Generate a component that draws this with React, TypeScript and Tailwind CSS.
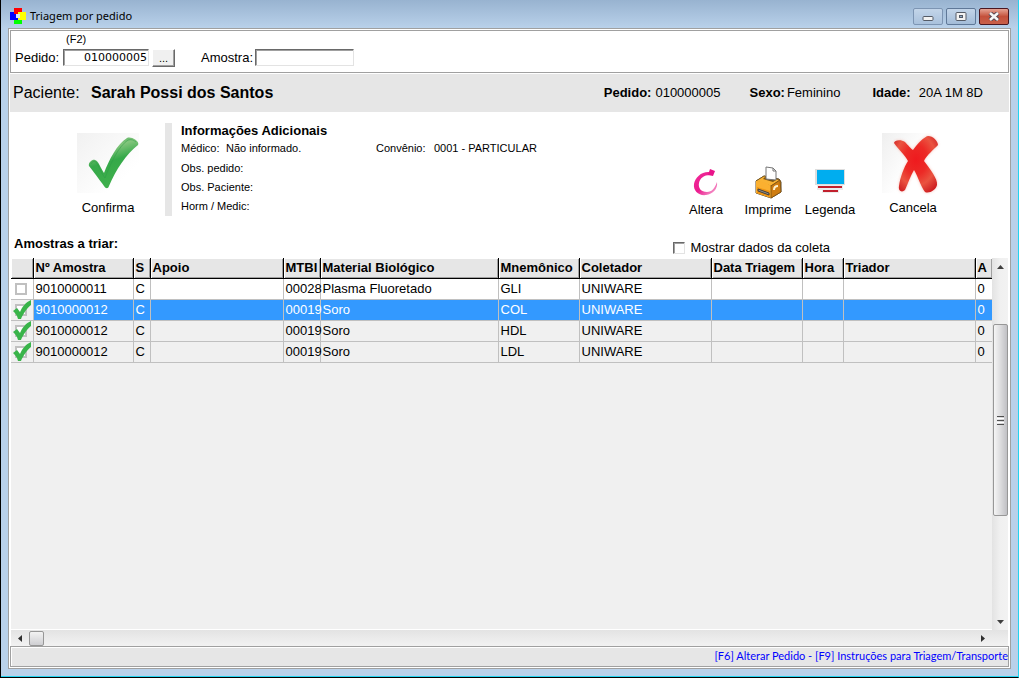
import { useState } from "react";
import type { ReactNode } from "react";

const columns = [
  { title: "", width: "w-[22px]" },
  { title: "Nº Amostra", width: "w-[100px]" },
  { title: "S", width: "w-[17px]" },
  { title: "Apoio", width: "w-[133px]" },
  { title: "MTBI", width: "w-[37px]" },
  { title: "Material Biológico", width: "w-[178px]" },
  { title: "Mnemônico", width: "w-[81px]" },
  { title: "Coletador", width: "w-[132px]" },
  { title: "Data Triagem", width: "w-[91px]" },
  { title: "Hora", width: "w-[41px]" },
  { title: "Triador", width: "" },
  { title: "A", width: "w-[17px]" },
];

const samples = [
  { id: 1, checked: false, cells: ["9010000011", "C", "", "00028", "Plasma Fluoretado", "GLI", "UNIWARE", "", "", "", "0"] },
  { id: 2, checked: true, cells: ["9010000012", "C", "", "00019", "Soro", "COL", "UNIWARE", "", "", "", "0"] },
  { id: 3, checked: true, cells: ["9010000012", "C", "", "00019", "Soro", "HDL", "UNIWARE", "", "", "", "0"] },
  { id: 4, checked: true, cells: ["9010000012", "C", "", "00019", "Soro", "LDL", "UNIWARE", "", "", "", "0"] },
];

const details = ["Obs. pedido:", "Obs. Paciente:", "Horm / Medic:"];

function LogoIcon() {
  return (
    <svg width="16" height="16" viewBox="0 0 16 16" shapeRendering="crispEdges">
      <rect x="4" y="0" width="8" height="8" fill="#ff0000" />
      <rect x="8" y="4" width="8" height="8" fill="#ffff00" />
      <rect x="4" y="8" width="8" height="8" fill="#00ff00" />
      <rect x="0" y="4" width="8" height="8" fill="#0000ff" />
      <rect x="4" y="4" width="4" height="2" fill="#ff0000" />
      <rect x="8" y="8" width="4" height="4" fill="#ffff00" />
      <rect x="6" y="6" width="4" height="4" fill="#dbe8f5" />
    </svg>
  );
}

function ConfirmIcon() {
  return (
    <svg width="62" height="62" viewBox="0 0 62 62">
      <defs>
        <linearGradient id="confirm-bg" x1="0" y1="0" x2="1" y2="1">
          <stop offset="0" stopColor="#f1f1f1" />
          <stop offset="0.75" stopColor="#ffffff" />
        </linearGradient>
        <linearGradient id="confirm-fill" x1="0" y1="0" x2="0.3" y2="1">
          <stop offset="0" stopColor="#2fa348" />
          <stop offset="0.3" stopColor="#83c57c" />
          <stop offset="0.55" stopColor="#35a949" />
          <stop offset="1" stopColor="#3fb04c" />
        </linearGradient>
      </defs>
      <rect width="62" height="60" fill="url(#confirm-bg)" />
      <path
        d="M12 33C11 30 15 26 18 27C21 27 24 36 27 40C32 27 40 11 50 5C54 3 63 8 61 12C49 21 39 37 32 53C31 56 29 56 27 53C22 46 16 38 12 33Z"
        fill="url(#confirm-fill)"
      />
      <path d="M14 31C15 28 18 28 19 29C22 33 24 40 28 45C34 29 42 13 51 7C54 6 57 7 59 9" fill="none" stroke="#2c9c45" strokeWidth="1" opacity="0.5" />
    </svg>
  );
}

const crossPath =
  "M12 10C12 7 19 6 23 9C26 12 29 16 31 17C36 10 42 4 46 3C51 3 56 8 56 12C52 16 44 23 42 28C48 36 56 46 55 52C54 57 47 61 43 59C39 54 35 41 32 37C29 42 26 50 23 57C20 60 16 58 17 53C18 45 22 34 26 28C23 22 16 16 12 10Z";

function CancelIcon() {
  return (
    <svg width="62" height="62" viewBox="0 0 62 62">
      <defs>
        <linearGradient id="cancel-bg" x1="0" y1="0" x2="1" y2="0.6">
          <stop offset="0" stopColor="#efefef" />
          <stop offset="0.6" stopColor="#ffffff" />
        </linearGradient>
        <radialGradient id="cancel-fill" cx="0.5" cy="0.42" r="0.65">
          <stop offset="0" stopColor="#ef1a1e" />
          <stop offset="0.4" stopColor="#ec2a26" />
          <stop offset="0.7" stopColor="#ea5340" />
          <stop offset="1" stopColor="#cf1f22" />
        </radialGradient>
        <filter id="cancel-glow" x="-20%" y="-20%" width="140%" height="140%">
          <feGaussianBlur stdDeviation="1.5" />
        </filter>
      </defs>
      <rect width="62" height="60" fill="url(#cancel-bg)" />
      <path d={crossPath} fill="#f29a8c" opacity="0.6" filter="url(#cancel-glow)" />
      <path d={crossPath} fill="url(#cancel-fill)" />
    </svg>
  );
}

function EditIcon() {
  return (
    <svg width="26" height="28" viewBox="0 0 26 28">
      <defs>
        <linearGradient id="edit-fill" x1="0" y1="0" x2="1" y2="1">
          <stop offset="0" stopColor="#f02a98" />
          <stop offset="0.5" stopColor="#ec1c8f" />
          <stop offset="1" stopColor="#f6b5d8" />
        </linearGradient>
      </defs>
      <path
        d="M17 3C9 2 2 8 1 15C0 22 6 27 13 26C20 25 25 20 24 13C22 19 19 23 14 23C8 23 5 19 6 14C7 9 11 6 17 6Z"
        fill="url(#edit-fill)"
      />
      <path d="M17 0L22 2L20 7L15 6Z" fill="#e9148a" />
    </svg>
  );
}

function PrinterIcon() {
  return (
    <svg width="30" height="33" viewBox="0 0 30 33">
      <path d="M3 15L11 10L26 13L28 16V26L18 32L3 27Z" fill="#f6a21b" stroke="#5a4a30" />
      <path d="M3 15L11 10L27 14L18 20Z" fill="#f9b233" stroke="#6d5020" strokeWidth="0.8" />
      <path d="M3 15C8 15 14 17 18 20V32L3 27Z" fill="#fbb030" />
      <path d="M4 21L17 25V31L4 27Z" fill="#ee9312" />
      <path d="M18 20L27 14L28 26L18 32Z" fill="#cf7d12" stroke="#7a5015" strokeWidth="0.8" />
      <path d="M10 13L20 16L23 14L12 11Z" fill="#7b5413" />
      <path d="M13 1L20 2L23 5V14L13 13Z" fill="#ffffff" stroke="#777777" />
      <path d="M20 2V5H23" fill="none" stroke="#777777" />
      <path d="M5 23L16 27V29L5 25Z" fill="#8f8f8f" stroke="#44413c" />
      <path d="M21 24C21 21 23 20 25 20" fill="none" stroke="#fff1cf" strokeWidth="2" />
    </svg>
  );
}

function LegendIcon() {
  return (
    <svg width="30" height="26" viewBox="0 0 30 26" shapeRendering="crispEdges">
      <rect width="30" height="16" fill="#dedede" />
      <rect x="2" y="1" width="27" height="14" fill="#00adef" />
      <rect x="2" y="16" width="26" height="5" fill="#ececec" />
      <rect x="3" y="17" width="24" height="2" fill="#c1202d" />
      <rect x="7" y="20" width="17" height="4" fill="#ececec" />
      <rect x="8" y="21" width="15" height="2" fill="#c1202d" />
    </svg>
  );
}

function ToolButton({ label, children }: { label: string; children: ReactNode }) {
  return (
    <button className="flex w-[62px] flex-col items-center">
      {children}
      <span className="text-[13px] leading-4">{label}</span>
    </button>
  );
}

function WindowControls() {
  return (
    <div className="flex gap-[3px]">
      <button
        aria-label="Minimizar"
        className="flex h-[17px] w-[30px] items-center justify-center rounded-xs border border-[#7d95b3] bg-gradient-to-b from-[#c3d5e9] to-[#a9c1dc]"
      >
        <svg width="12" height="9" viewBox="0 0 12 9">
          <rect x="1" y="4.5" width="10" height="4" rx="1" fill="#f2f2f2" stroke="#555b66" />
        </svg>
      </button>
      <button
        aria-label="Maximizar"
        className="flex h-[17px] w-[30px] items-center justify-center rounded-xs border border-[#5f7898] bg-gradient-to-b from-[#c3d5e9] to-[#a3bcd8]"
      >
        <svg width="12" height="9" viewBox="0 0 12 9">
          <rect x="1" y="0.5" width="10" height="8" rx="1" fill="#f2f2f2" stroke="#555b66" />
          <rect x="4.5" y="3.5" width="3" height="2" fill="#8fa9c8" stroke="#555b66" />
        </svg>
      </button>
      <button
        aria-label="Fechar"
        className="flex h-[17px] w-[30px] items-center justify-center rounded-xs border border-[#4b1720] bg-gradient-to-b from-[#e5a394] via-[#c4503b] to-[#c9604a]"
      >
        <svg width="12" height="9" viewBox="0 0 12 9">
          <path d="M2 1L10 8M10 1L2 8" stroke="#5a4650" strokeWidth="4.5" />
          <path d="M2 1L10 8M10 1L2 8" stroke="#f6f6f6" strokeWidth="2.5" />
        </svg>
      </button>
    </div>
  );
}

function CheckCell({ checked, onChange, label }: { checked: boolean; onChange: () => void; label: string }) {
  return (
    <label className="relative flex h-5 items-center pl-1">
      <input
        type="checkbox"
        aria-label={label}
        checked={checked}
        onChange={onChange}
        className="h-3 w-3 appearance-none border-2 border-[#c0c0c0] bg-white"
      />
      {checked && (
        <svg className="absolute left-0.5 top-0" width="19" height="20" viewBox="0 0 19 20">
          <path d="M0 11L4 8L7 12C9 7 13 2 18 0V5C14 8 10 14 8 19H5C4 15 2 13 0 11Z" fill="#39b44a" />
        </svg>
      )}
    </label>
  );
}

function SamplesTable() {
  const [rows, setRows] = useState(samples);
  const [selected, setSelected] = useState(2);

  const toggle = (id: number) =>
    setRows(rows.map((row) => (row.id === id ? { ...row, checked: !row.checked } : row)));

  return (
    <table className="w-full table-fixed border-collapse text-[13px] leading-5">
      <thead>
        <tr className="bg-[#e6e6e6]">
          {columns.map((column, i) => (
            <th
              key={i}
              className={`h-5 border-b border-r border-black p-0 pt-px pl-0.5 text-left leading-[18px] font-bold whitespace-nowrap shadow-[inset_1px_1px_0_#fff,inset_-1px_-1px_0_#a0a0a0] last:border-r-0 ${column.width}`}
            >
              {column.title}
            </th>
          ))}
        </tr>
      </thead>
      <tbody>
        {rows.map((row) => (
          <tr
            key={row.id}
            onClick={() => setSelected(row.id)}
            className={row.id === selected ? "bg-[#3399ff] text-white" : row.checked ? "bg-[#f0f0f0]" : "bg-white"}
          >
            <td className={`h-[21px] border-b border-r border-[#c0c0c0] p-0 ${row.checked ? "bg-[#f0f0f0]" : "bg-white"}`}>
              <CheckCell
                checked={row.checked}
                onChange={() => toggle(row.id)}
                label={`Amostra ${row.cells[0]} ${row.cells[5]}`}
              />
            </td>
            {row.cells.map((cell, i) => (
              <td
                key={i}
                className="h-[21px] border-b border-r border-[#c0c0c0] p-0 pl-0.5 whitespace-nowrap last:border-r-0"
              >
                {cell}
              </td>
            ))}
          </tr>
        ))}
      </tbody>
    </table>
  );
}

function VerticalScroll() {
  return (
    <div className="flex w-4 shrink-0 flex-col items-center bg-gradient-to-r from-[#e3e3e3] via-[#f0f0f0] to-[#f2f2f2]">
      <div className="flex h-[17px] items-center">
        <svg width="7" height="4" viewBox="0 0 7 4"><path d="M0 4L3.5 0L7 4Z" fill="#404040" /></svg>
      </div>
      <div className="flex-[49]" />
      <div className="flex w-[15px] flex-[191] flex-col items-center justify-center gap-px rounded-[2px] border border-[#979797] bg-gradient-to-r from-[#f5f5f5] via-[#dcdcde] to-[#c0c0c4]">
        <span className="h-px w-[7px] bg-[#505050]" />
        <span className="h-px w-[7px] bg-white" />
        <span className="h-px w-[7px] bg-[#505050]" />
        <span className="h-px w-[7px] bg-white" />
        <span className="h-px w-[7px] bg-[#505050]" />
      </div>
      <div className="flex-[97]" />
      <div className="flex h-[17px] items-center">
        <svg width="7" height="4" viewBox="0 0 7 4"><path d="M0 0L3.5 4L7 0Z" fill="#404040" /></svg>
      </div>
    </div>
  );
}

function HorizontalScroll() {
  return (
    <div className="flex h-4 shrink-0 items-center bg-gradient-to-b from-[#e3e3e3] via-[#ebebeb] to-[#f2f2f2]">
      <div className="flex w-[18px] justify-center">
        <svg width="4" height="7" viewBox="0 0 4 7"><path d="M4 0L0 3.5L4 7Z" fill="#303030" /></svg>
      </div>
      <div className="h-[15px] w-[15px] rounded-[2px] border border-[#979797] bg-gradient-to-b from-[#f3f3f3] to-[#cfcfd2]" />
      <div className="flex-1" />
      <div className="mr-4 flex w-[18px] justify-center">
        <svg width="4" height="7" viewBox="0 0 4 7"><path d="M0 0L4 3.5L0 7Z" fill="#303030" /></svg>
      </div>
    </div>
  );
}

export default function App() {
  return (
    <div className="flex h-screen flex-col border-x border-b border-l-black border-r-[#22d3f0] border-b-black bg-[#b9d1ea] font-['Liberation_Sans',Arial,sans-serif] text-black">
      <header className="flex h-7 shrink-0 items-center justify-between bg-gradient-to-b from-[#98b3d0] to-[#b9d1ea] pr-[9px] pl-[9px] pt-1">
        <div className="flex items-center gap-1">
          <LogoIcon />
          <h1 className="font-['Noto_Sans','Open_Sans',sans-serif] text-[11px]">Triagem por pedido</h1>
        </div>
        <WindowControls />
      </header>

      <div className="flex min-h-0 flex-1 border-b border-[#22d3f0] px-[7px] pb-[7px]">
        <main className="flex min-w-0 flex-1 flex-col border border-[#a0a0a0] bg-white p-px">
          {/* Busca */}
          <section className="mb-px h-[43px] shrink-0 border border-[#a0a0a0] pl-1 text-[13px]">
            <div className="h-[17px] pl-[51px] text-[11px] leading-[17px]">(F2)</div>
            <div className="flex items-center">
              <label htmlFor="pedido" className="w-12">Pedido:</label>
              <input
                id="pedido"
                defaultValue="010000005"
                className="h-[17px] w-[86px] border border-b-[#e3e3e3] border-l-[#696969] border-r-[#e3e3e3] border-t-[#696969] px-px text-right font-['DejaVu_Sans',sans-serif] text-[11px] shadow-[inset_1px_1px_0_#a0a0a0] outline-none"
              />
              <button
                aria-label="Procurar pedido"
                className="ml-[3px] h-[18px] w-[23px] border border-b-[#696969] border-l-white border-r-[#696969] border-t-white bg-[#f0f0f0] text-[11px] leading-4 shadow-[inset_-1px_-1px_0_#a0a0a0]"
              >
                ...
              </button>
              <label htmlFor="amostra" className="ml-[26px] w-[54px]">Amostra:</label>
              <input
                id="amostra"
                className="h-[17px] w-[99px] border border-b-[#e3e3e3] border-l-[#696969] border-r-[#e3e3e3] border-t-[#696969] px-px text-[11px] shadow-[inset_1px_1px_0_#a0a0a0] outline-none"
              />
            </div>
          </section>

          {/* Paciente */}
          <section className="flex h-[38px] shrink-0 items-center bg-[#e6e6e6] pl-[3px] pr-[26px] text-[13px]">
            <span className="w-[78px] text-base">Paciente:</span>
            <h2 className="text-base font-bold">Sarah Possi dos Santos</h2>
            <dl className="ml-auto flex">
              <dt className="font-bold">Pedido:</dt>
              <dd className="mr-[29px] ml-1">010000005</dd>
              <dt className="font-bold">Sexo:</dt>
              <dd className="mr-8 ml-0.5">Feminino</dd>
              <dt className="font-bold">Idade:</dt>
              <dd className="ml-2">20A 1M 8D</dd>
            </dl>
          </section>

          <section className="flex h-[122px] shrink-0 items-start pr-[65px] pl-[67px]">
            <div className="pt-[21px]">
              <ToolButton label="Confirma">
                <ConfirmIcon />
                <span className="h-[5px]" />
              </ToolButton>
            </div>
            <div className="mt-[11px] ml-[26px] h-[93px] w-[7px] bg-[#e6e6e6]" />
            <div className="mt-[11px] ml-[9px] text-[11px]">
              <h3 className="text-[13px] leading-[15px] font-bold">Informações Adicionais</h3>
              <div className="mb-px flex h-5 items-center">
                <span className="w-[45px]">Médico:</span>
                <span className="w-[150px]">Não informado.</span>
                <span className="w-[58px]">Convênio:</span>
                <span>0001 - PARTICULAR</span>
              </div>
              {details.map((detail) => (
                <div key={detail} className="flex h-[19px] items-center">{detail}</div>
              ))}
            </div>
            <div className="ml-auto flex">
              <div className="flex pt-[54px]">
                <ToolButton label="Altera">
                  <span className="flex h-9 items-start pt-[3px]"><EditIcon /></span>
                </ToolButton>
                <ToolButton label="Imprime">
                  <span className="flex h-9 items-start"><PrinterIcon /></span>
                </ToolButton>
                <ToolButton label="Legenda">
                  <span className="flex h-9 items-start pt-[3px]"><LegendIcon /></span>
                </ToolButton>
              </div>
              <div className="ml-[21px] pt-[21px]">
                <ToolButton label="Cancela">
                  <CancelIcon />
                  <span className="h-[5px]" />
                </ToolButton>
              </div>
            </div>
          </section>

          <div className="flex h-6 shrink-0 justify-between pr-[179px] pl-1 text-[13px] leading-5">
            <h3 className="font-bold">Amostras a triar:</h3>
            <label className="flex items-center gap-1.5 pt-1">
              <input
                type="checkbox"
                className="h-3 w-3 appearance-none border border-b-[#e3e3e3] border-l-[#696969] border-r-[#e3e3e3] border-t-[#696969] bg-white shadow-[inset_1px_1px_0_#a0a0a0] checked:bg-[#3399ff]"
              />
              Mostrar dados da coleta
            </label>
          </div>

          {/* Amostras */}
          <section className="flex min-h-0 flex-1 flex-col px-px">
            <div className="flex min-h-0 flex-1">
              <div className="min-w-0 flex-1 overflow-hidden border-b border-white bg-[#f0f0f0]">
                <SamplesTable />
              </div>
              <VerticalScroll />
            </div>
            <HorizontalScroll />
          </section>

          <footer className="h-[21px] shrink-0 border border-[#a0a0a0] bg-[#e6e6e6] text-right font-['Lato','Liberation_Sans',sans-serif] text-[11px] leading-[18px] text-[#0000ff] shadow-[inset_1px_1px_0_#fff]">
            [F6] Alterar Pedido - [F9] Instruções para Triagem/Transporte
          </footer>
        </main>
      </div>
    </div>
  );
}
